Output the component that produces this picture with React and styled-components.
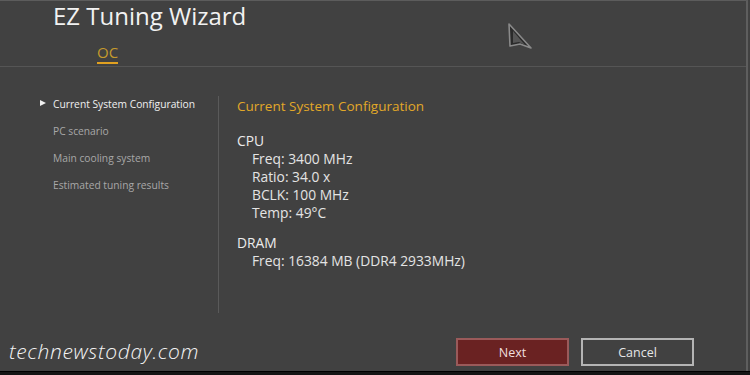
import React from 'react'
import styled, { createGlobalStyle } from 'styled-components'

const GlobalStyle = createGlobalStyle`
	html, body {
		margin: 0;
		padding: 0;
		background: #414141;
	}
	body {
		font-family: 'Open Sans', 'Noto Sans', sans-serif;
	}
`

const steps = [
	'Current System Configuration',
	'PC scenario',
	'Main cooling system',
	'Estimated tuning results',
]

const cpu = ['Freq: 3400 MHz', 'Ratio: 34.0 x', 'BCLK: 100 MHz', 'Temp: 49°C']

const Cursor = () => (
	<CursorBox>
		<svg width='26' height='30' viewBox='0 0 26 30'>
			<path
				d='M2 2 L24 26 L13 22 L3 24 Z'
				fill='#2a2a2a'
				stroke='#8a8a8a'
				strokeWidth='1.6'
				strokeLinejoin='round'
			/>
			<path d='M6 9 L18 23 L12 20 L6 21 Z' fill='#555' />
		</svg>
	</CursorBox>
)

const App = () => {
	return (
		<>
			<GlobalStyle />
			<Screen>
				<Header>
					<Title>EZ Tuning Wizard</Title>
					<Tab>OC</Tab>
					<Cursor />
				</Header>
				<Body>
					<Steps>
						{steps.map((s, index) => (
							<Step key={index} active={index === 0}>
								{s}
							</Step>
						))}
					</Steps>
					<Content>
						<Heading>Current System Configuration</Heading>
						<Group>
							<GroupName>CPU</GroupName>
							{cpu.map((c, index) => (
								<Item key={index}>{c}</Item>
							))}
						</Group>
						<Group>
							<GroupName>DRAM</GroupName>
							<Item>Freq: 16384 MB (DDR4 2933MHz)</Item>
						</Group>
					</Content>
				</Body>
				<Footer>
					<Watermark>technewstoday.com</Watermark>
					<Buttons>
						<Button primary>Next</Button>
						<Button>Cancel</Button>
					</Buttons>
				</Footer>
			</Screen>
			<Bottom />
		</>
	)
}

const Screen = styled.div`
	width: 748px;
	height: 371px;
	background: #414141;
	border-top: 1px solid #5c5c5c;
	border-right: 2px solid #5e5e5e;
	display: flex;
	flex-direction: column;
	box-sizing: border-box;
`

const Header = styled.div`
	position: relative;
	height: 65px;
	border-bottom: 1px solid #555;
	padding-left: 53px;
	display: flex;
	flex-direction: column;
	align-items: flex-start;
	box-sizing: content-box;
`

const Title = styled.h1`
	margin: 0;
	margin-top: -2px;
	font-size: 24px;
	font-weight: 400;
	line-height: 34px;
	color: #f2f2f2;
`

const Tab = styled.div`
	margin-left: 44px;
	margin-top: 10px;
	font-size: 15px;
	line-height: 18px;
	color: #c49a2c;
	border-bottom: 2px solid #e0a020;
	padding-bottom: 1px;
`

const CursorBox = styled.div`
	position: absolute;
	left: 507px;
	top: 21px;
`

const Body = styled.div`
	display: flex;
	padding-top: 29px;
	height: 217px;
`

const Steps = styled.ul`
	list-style: none;
	margin: 0;
	padding: 0 0 0 53px;
	border-right: 1px solid #5a5a5a;
	box-sizing: border-box;
	width: 219px;
	display: flex;
	flex-direction: column;
	gap: 11px;
`

const Step = styled.li`
	position: relative;
	font-size: 10.25px;
	line-height: 16px;
	color: ${(p) => (p.active ? '#f0f0f0' : '#a8a8a8')};
	&::before {
		content: '';
		display: ${(p) => (p.active ? 'block' : 'none')};
		position: absolute;
		left: -13px;
		top: 4px;
		border-left: 6px solid #f0f0f0;
		border-top: 3.5px solid transparent;
		border-bottom: 3.5px solid transparent;
	}
`

const Content = styled.div`
	padding-left: 18px;
	display: flex;
	flex-direction: column;
`

const Heading = styled.h2`
	margin: 0 0 16px;
	font-size: 13.5px;
	font-weight: 400;
	line-height: 20px;
	color: #e2a828;
`

const Group = styled.div`
	display: flex;
	flex-direction: column;
	margin-bottom: 12px;
`

const GroupName = styled.div`
	font-size: 13.8px;
	line-height: 18px;
	color: #ececec;
`

const Item = styled.div`
	padding-left: 15px;
	font-size: 13.8px;
	line-height: 18px;
	color: #e4e4e4;
`

const Footer = styled.div`
	flex: 1;
	display: flex;
	align-items: flex-end;
	justify-content: space-between;
	padding: 0 52px 5px 9px;
`

const Watermark = styled.div`
	font-family: 'Open Sans', sans-serif;
	font-style: italic;
	font-weight: 300;
	font-size: 21px;
	letter-spacing: 0.65px;
	color: #f4f4f4;
	margin-bottom: 1px;
`

const Buttons = styled.div`
	display: flex;
	gap: 12px;
`

const Button = styled.button`
	width: 113px;
	height: 28px;
	font-family: 'Open Sans', sans-serif;
	font-size: 12.5px;
	color: ${(p) => (p.primary ? '#f0dede' : '#e6e6e6')};
	background: ${(p) => (p.primary ? '#6a2222' : 'transparent')};
	border: 2px solid ${(p) => (p.primary ? '#9a5a5a' : '#b4b4b4')};
	cursor: pointer;
`

const Bottom = styled.div`
	height: 4px;
	background: #151515;
	border-top: 1px solid #000;
`

export default App
